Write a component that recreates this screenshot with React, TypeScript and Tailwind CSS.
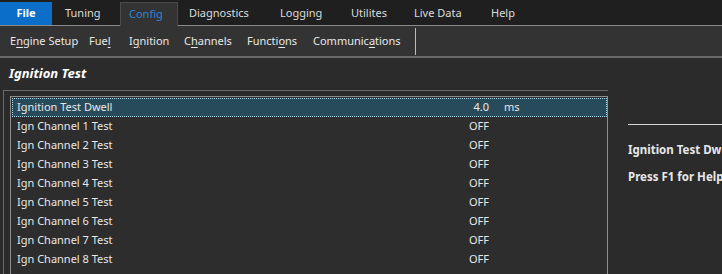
import React from "react";

const font = { fontFamily: '"Noto Sans", "Open Sans", sans-serif' };

function U({ pre, u, post }: { pre: string; u: string; post: string }) {
  return (
    <span>
      {pre}
      <span className="underline underline-offset-2">{u}</span>
      {post}
    </span>
  );
}

const rows = [
  ["Ignition Test Dwell", "4.0", "ms"],
  ["Ign Channel 1 Test", "OFF", ""],
  ["Ign Channel 2 Test", "OFF", ""],
  ["Ign Channel 3 Test", "OFF", ""],
  ["Ign Channel 4 Test", "OFF", ""],
  ["Ign Channel 5 Test", "OFF", ""],
  ["Ign Channel 6 Test", "OFF", ""],
  ["Ign Channel 7 Test", "OFF", ""],
  ["Ign Channel 8 Test", "OFF", ""],
];

const menu: [string, string][] = [
  ["Diagnostics", "w-[90px] pl-[11px]"],
  ["Logging", "w-[72px] pl-[12px]"],
  ["Utilites", "w-[62px] pl-[11px]"],
  ["Live Data", "w-[77px] pl-[12px]"],
  ["Help", "w-[61px] pl-[12px]"],
];

export default function App() {
  return (
    <div className="w-[722px] h-[274px] overflow-hidden bg-[#2b2b2b] text-[11px] text-[#e8e8e8] flex flex-col" style={font}>
      {/* menu bar */}
      <div className="h-[26px] bg-[#1f1f1f] border-b border-[#8a8a8a] flex items-end shrink-0">
        <div className="w-[52px] h-[23px] bg-[#0b6ec9] text-white font-bold flex items-center justify-center">File</div>
        <div className="w-[68px] h-[23px] flex items-center pl-[13px] text-[#dcdcdc]">Tuning</div>
        <div className="w-[58px] h-[24px] -mb-px bg-[#333333] border border-b-0 border-[#4a4a4a] flex items-center pl-[8px] text-[#2b86d8]">Config</div>
        {menu.map(([t, c]) => (
          <div key={t} className={"h-[23px] flex items-center text-[#dcdcdc] " + c}>{t}</div>
        ))}
      </div>
      {/* toolbar */}
      <div className="h-[32px] bg-[#333333] border-b-2 border-[#6a6a6a] flex items-center shrink-0 text-[#e8e8e8]">
        <div className="pl-[10px] flex items-center">
          <span className="w-[79px]"><U pre="E" u="n" post="gine Setup" /></span>
          <span className="w-[40px]"><U pre="Fue" u="l" post="" /></span>
          <span className="w-[55px]"><U pre="I" u="g" post="nition" /></span>
          <span className="w-[63px]"><U pre="C" u="h" post="annels" /></span>
          <span className="w-[66px]"><U pre="Functi" u="o" post="ns" /></span>
          <span className="w-[102px]"><U pre="Communic" u="a" post="tions" /></span>
        </div>
        <div className="w-px h-[27px] bg-[#bdbdbd]" />
      </div>
      {/* title */}
      <div className="h-[32px] flex items-center pl-[9px] font-bold italic text-white text-[13px] shrink-0">Ignition Test</div>
      {/* content */}
      <div className="flex flex-1 min-h-0">
        <div className="ml-[3px] w-[605px] shrink-0 border-l border-t border-[#6b6b6b] pt-[5px] pl-[6px]">
          <div className="h-[200px] w-[598px] border border-[#8e8e8e] border-b-0 bg-[#2d2d2d] pt-[1px] pl-[1px] flex flex-col">
            {rows.map(([name, val, unit], i) => (
              <div
                key={i}
                className={
                  "h-[19px] w-[595px] shrink-0 flex items-center " +
                  (i === 0 ? "bg-[#284b5c] outline-1 outline-dotted outline-[#a9d8ec] -outline-offset-1" : "")
                }
              >
                <span className="pl-[5px] w-[477px]">{name}</span>
                <span className="w-[0px] flex justify-end">
                  <span className="whitespace-nowrap">{val}</span>
                </span>
                <span className="pl-[15px]">{unit}</span>
              </div>
            ))}
          </div>
        </div>
        <div className="flex-1 pl-[20px] pt-[34px] overflow-hidden whitespace-nowrap text-[11.5px]">
          <div className="h-px bg-[#d8d8d8] w-[200px]" />
          <div className="mt-[16px] font-bold text-[#e8e8e8]">Ignition Test Dwell</div>
          <div className="mt-[10px] font-bold text-[#e8e8e8]">Press F1 for Help</div>
        </div>
      </div>
    </div>
  );
}
